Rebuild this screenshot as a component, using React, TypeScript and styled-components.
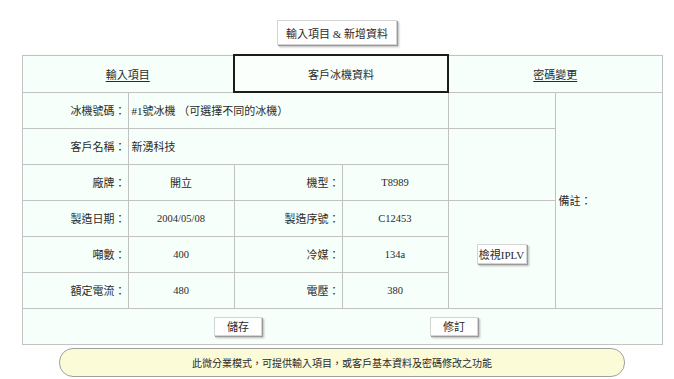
import React from "react";
import styled, { createGlobalStyle } from "styled-components";

const GlobalStyle = createGlobalStyle`
  html, body {
    margin: 0;
    padding: 0;
    background: #ffffff;
  }
  body {
    font-family: "Liberation Serif", "Noto Sans CJK TC", serif;
    font-size: 11px;
    color: #2a2a2a;
  }
`;

const Page = styled.div`
  width: 674px;
  padding-top: 20px;
  display: flex;
  flex-direction: column;
`;

const TopBar = styled.div`
  display: flex;
  justify-content: center;
`;

const RaisedButton = styled.button<{ $w?: number; $h?: number }>`
  width: ${p => p.$w ?? 48}px;
  height: ${p => p.$h ?? 19}px;
  padding: 0;
  background: #ffffff;
  border: 1px solid #d4d4d4;
  box-shadow: 1px 1px 0 #9a9a9a, 2px 2px 2px #b8b8b8;
  font-family: inherit;
  font-size: 11px;
  color: #2a2a2a;
  cursor: pointer;
`;

const Main = styled.div`
  width: 640px;
  margin: 9px 0 0 22px;
  display: flex;
  flex-direction: column;
  align-items: center;
`;

const Grid = styled.table`
  width: 640px;
  table-layout: fixed;
  border-collapse: collapse;
  border: 1px solid #b4b4b4;
  background: #f6fff9;
`;

const Row = styled.tr<{ $h?: number }>`
  height: ${p => p.$h ?? 36}px;
`;

const Tab = styled.td<{ $active?: boolean }>`
  text-align: center;
  border: ${p => (p.$active ? "2px solid #1c1c1c" : "1px solid #c2c2c2")};
  background: ${p => (p.$active ? "#fbfffc" : "transparent")};
  padding: 0;
`;

const TabLink = styled.a`
  color: #2a2a2a;
  text-decoration: underline;
  text-underline-offset: 2px;
  cursor: pointer;
`;

const Cell = styled.td<{ $align?: "left" | "center" | "right" }>`
  border: 1px solid #c2c2c2;
  text-align: ${p => p.$align ?? "center"};
  vertical-align: middle;
  padding: ${p => (p.$align === "right" ? "0 2px 0 0" : p.$align === "left" ? "0 0 0 3px" : "0")};
  white-space: nowrap;
`;

const Num = styled.span`
  font-size: 10.5px;
`;

const ActionRow = styled.div`
  display: flex;
  justify-content: center;
  gap: 168px;
  padding-left: 8px;
`;

const Notice = styled.div`
  width: 564px;
  height: 27px;
  margin-top: 3px;
  border: 1px solid #a0a0a0;
  border-radius: 14px;
  background: #fbfbd8;
  display: flex;
  align-items: center;
  justify-content: center;
  font-size: 10px;
`;

type Spec = [string, string, string, string];

const specs: Spec[] = [
  ["廠牌：", "開立", "機型：", "T8989"],
  ["製造日期：", "2004/05/08", "製造序號：", "C12453"],
  ["噸數：", "400", "冷媒：", "134a"],
  ["額定電流：", "480", "電壓：", "380"],
];

const isLatin = (v: string) => /^[\x20-\x7e]+$/.test(v);

const Value = ({ v }: { v: string }) => (isLatin(v) ? <Num>{v}</Num> : <>{v}</>);

export default function App() {
  return (
    <Page>
      <GlobalStyle />
      <TopBar>
        <RaisedButton $w={120} $h={25}>輸入項目 &amp; 新增資料</RaisedButton>
      </TopBar>
      <Main>
        <Grid>
          <colgroup>
            <col style={{ width: 106 }} />
            <col style={{ width: 106 }} />
            <col style={{ width: 108 }} />
            <col style={{ width: 106 }} />
            <col style={{ width: 107 }} />
            <col style={{ width: 107 }} />
          </colgroup>
          <tbody>
            <Row $h={37}>
              <Tab colSpan={2}><TabLink>輸入項目</TabLink></Tab>
              <Tab colSpan={2} $active>客戶冰機資料</Tab>
              <Tab colSpan={2}><TabLink>密碼變更</TabLink></Tab>
            </Row>
            <Row>
              <Cell $align="right">冰機號碼：</Cell>
              <Cell colSpan={3} $align="left">#1號冰機 （可選擇不同的冰機）</Cell>
              <Cell />
              <Cell rowSpan={6} $align="left">備註：</Cell>
            </Row>
            <Row>
              <Cell $align="right">客戶名稱：</Cell>
              <Cell colSpan={3} $align="left">新湧科技</Cell>
              <Cell rowSpan={2} />
            </Row>
            {specs.map((s, i) => (
              <Row key={s[0]}>
                <Cell $align="right">{s[0]}</Cell>
                <Cell><Value v={s[1]} /></Cell>
                <Cell $align="right">{s[2]}</Cell>
                <Cell><Value v={s[3]} /></Cell>
                {i === 1 && (
                  <Cell rowSpan={3}>
                    <RaisedButton $w={50} $h={20}>檢視IPLV</RaisedButton>
                  </Cell>
                )}
              </Row>
            ))}
            <Row>
              <Cell colSpan={6}>
                <ActionRow>
                  <RaisedButton>儲存</RaisedButton>
                  <RaisedButton>修訂</RaisedButton>
                </ActionRow>
              </Cell>
            </Row>
          </tbody>
        </Grid>
        <Notice>此微分業模式，可提供輸入項目，或客戶基本資料及密碼修改之功能</Notice>
      </Main>
    </Page>
  );
}
